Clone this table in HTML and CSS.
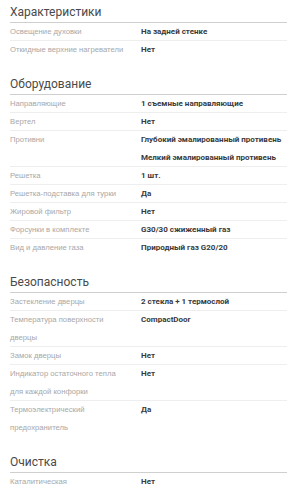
FILE: index.html
```html
<!DOCTYPE html>
<html lang="ru">
<head>
<meta charset="utf-8">
<link rel="stylesheet" href="styles.css">
</head>
<body>
<div class="specs">
  <section class="group">
    <h2 class="group-title">Характеристики</h2>
    <div class="row"><div class="label">Освещение духовки</div><div class="value">На задней стенке</div></div>
    <div class="row"><div class="label">Откидные верхние нагреватели</div><div class="value">Нет</div></div>
  </section>
  <section class="group">
    <h2 class="group-title">Оборудование</h2>
    <div class="row"><div class="label">Направляющие</div><div class="value">1 съемные направляющие</div></div>
    <div class="row"><div class="label">Вертел</div><div class="value">Нет</div></div>
    <div class="row"><div class="label">Противни</div><div class="value"><div>Глубокий эмалированный противень</div><div>Мелкий эмалированный противень</div></div></div>
    <div class="row"><div class="label">Решетка</div><div class="value">1 шт.</div></div>
    <div class="row"><div class="label">Решетка-подставка для турки</div><div class="value">Да</div></div>
    <div class="row"><div class="label">Жировой фильтр</div><div class="value">Нет</div></div>
    <div class="row"><div class="label">Форсунки в комплекте</div><div class="value">G30/30 сжиженный газ</div></div>
    <div class="row"><div class="label">Вид и давление газа</div><div class="value">Природный газ G20/20</div></div>
  </section>
  <section class="group">
    <h2 class="group-title">Безопасность</h2>
    <div class="row"><div class="label">Застекление дверцы</div><div class="value">2 стекла + 1 термослой</div></div>
    <div class="row"><div class="label">Температура поверхности дверцы</div><div class="value">CompactDoor</div></div>
    <div class="row"><div class="label">Замок дверцы</div><div class="value">Нет</div></div>
    <div class="row"><div class="label">Индикатор остаточного тепла для каждой конфорки</div><div class="value">Нет</div></div>
    <div class="row"><div class="label">Термоэлектрический предохранитель</div><div class="value">Да</div></div>
  </section>
  <section class="group">
    <h2 class="group-title">Очистка</h2>
    <div class="row"><div class="label">Каталитическая</div><div class="value">Нет</div></div>
  </section>
</div>
</body>
</html>
```
FILE: styles.css
```css
html, body {
  margin: 0;
  padding: 0;
  background: #ffffff;
}
body {
  font-family: Roboto, "Liberation Sans", Arial, sans-serif;
  overflow: hidden;
}
.specs {
  padding: 0 0 0 10px;
}
.group {
  margin-bottom: 13px;
}
.group-title {
  margin: 0;
  height: 22px;
  line-height: 24px;
  font-family: Roboto, "Liberation Sans", sans-serif;
  font-weight: 400;
  font-size: 12px;
  color: #4a4a4a;
  border-bottom: 1px solid #cfcfcf;
}
.row {
  display: grid;
  grid-template-columns: 115px 1fr;
  column-gap: 16px;
  line-height: 18px;
  font-size: 8px;
  box-shadow: inset 0 -1px 0 #eeeeee;
}
.row:last-child {
  box-shadow: none;
}
.label {
  font-family: "Liberation Sans", Arial, sans-serif;
  font-size: 7.7px;
  color: #a8a8a8;
}
.value {
  color: #3a3a3a;
  font-weight: 700;
  white-space: nowrap;
}
```
